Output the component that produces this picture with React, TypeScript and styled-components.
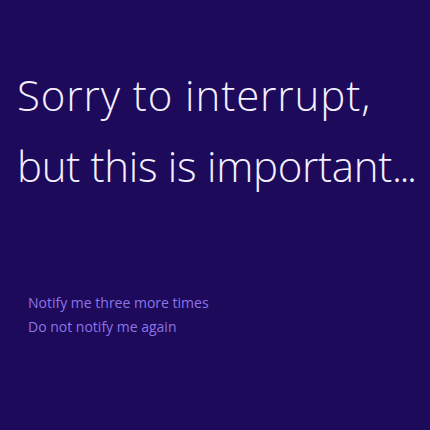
import React from 'react';
import styled, { createGlobalStyle } from 'styled-components';

const GlobalStyle = createGlobalStyle`
    html, body {
        margin: 0;
        padding: 0;
        background: #1d0a5b;
    }
`;

const Screen = styled.main`
    width: 430px;
    height: 430px;
    box-sizing: border-box;
    padding: 59px 0 0 17px;
    background: #1d0a5b;
    display: flex;
    flex-direction: column;
    font-family: 'Open Sans', 'Noto Sans', sans-serif;
    overflow: hidden;
`;

const Headline = styled.h1`
    margin: 0;
    color: #f4f0ff;
    font-size: 42px;
    font-weight: 300;
    line-height: 71px;
    white-space: nowrap;
`;

const Line = styled.span<{ $tracking: number }>`
    display: block;
    letter-spacing: ${(p) => p.$tracking}px;
`;

const Dots = styled.span`
    letter-spacing: -2.5px;
`;

const Options = styled.nav`
    margin-top: 93px;
    padding-left: 11px;
    display: flex;
    flex-direction: column;
    gap: 7px;
`;

const OptionLink = styled.a`
    color: #8d74e6;
    font-size: 14px;
    line-height: 17px;
    text-decoration: none;
    cursor: pointer;
`;

export default function App(): JSX.Element {
    return (
        <>
            <GlobalStyle />
            <Screen>
                <Headline>
                    <Line $tracking={0.9}>Sorry to interrupt,</Line>
                    <Line $tracking={-0.3}>
                        but this is important<Dots>...</Dots>
                    </Line>
                </Headline>
                <Options>
                    <OptionLink>Notify me three more times</OptionLink>
                    <OptionLink>Do not notify me again</OptionLink>
                </Options>
            </Screen>
        </>
    );
}
